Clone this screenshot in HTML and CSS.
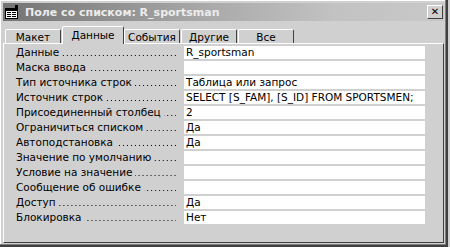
FILE: index.html
```html
<!DOCTYPE html>
<html>
<head>
    <title>Поле со списком: R_sportsman</title>
    <link rel="stylesheet" href="styles.css">
</head>
<body>
    <div class="window">
        <div class="titlebar">
            <svg class="app-icon" width="14" height="14" viewBox="0 0 14 14">
                <rect x="0.5" y="3.5" width="12" height="10" fill="#fff" stroke="#000"/>
                <rect x="1" y="4" width="11" height="2" fill="#000"/>
                <rect x="2" y="7" width="4" height="1" fill="#000"/>
                <rect x="7" y="7" width="4" height="1" fill="#000"/>
                <rect x="2" y="9" width="4" height="1" fill="#000"/>
                <rect x="7" y="9" width="4" height="1" fill="#000"/>
                <rect x="2" y="11" width="4" height="1" fill="#000"/>
                <rect x="7" y="11" width="4" height="1" fill="#000"/>
                <path d="M10 0 L13 0 L13 3 L11.5 4.5 L10 3 Z" fill="#000"/>
            </svg>
            <span class="title">Поле со списком: R_sportsman</span>
            <div class="close">&#x2715;</div>
        </div>

        <div class="tabs">
            <div class="tab">Макет</div>
            <div class="tab active">Данные</div>
            <div class="tab">События</div>
            <div class="tab">Другие</div>
            <div class="tab">Все</div>
        </div>

        <div class="panel">
            <div class="props">
                <div class="name"><span>Данные</span><i class="dots"></i></div>
                <div class="value">R_sportsman</div>

                <div class="name"><span>Маска ввода</span><i class="dots"></i></div>
                <div class="value"></div>

                <div class="name"><span>Тип источника строк</span><i class="dots"></i></div>
                <div class="value">Таблица или запрос</div>

                <div class="name"><span>Источник строк</span><i class="dots"></i></div>
                <div class="value">SELECT [S_FAM], [S_ID] FROM SPORTSMEN;</div>

                <div class="name"><span>Присоединенный столбец</span><i class="dots"></i></div>
                <div class="value">2</div>

                <div class="name"><span>Ограничиться списком</span><i class="dots"></i></div>
                <div class="value">Да</div>

                <div class="name"><span>Автоподстановка</span><i class="dots"></i></div>
                <div class="value">Да</div>

                <div class="name"><span>Значение по умолчанию</span><i class="dots"></i></div>
                <div class="value"></div>

                <div class="name"><span>Условие на значение</span><i class="dots"></i></div>
                <div class="value"></div>

                <div class="name"><span>Сообщение об ошибке</span><i class="dots"></i></div>
                <div class="value"></div>

                <div class="name"><span>Доступ</span><i class="dots"></i></div>
                <div class="value">Да</div>

                <div class="name"><span>Блокировка</span><i class="dots"></i></div>
                <div class="value">Нет</div>
            </div>
        </div>
    </div>
</body>
</html>
```

FILE: styles.css
```css
body { margin: 0; background: #d0d0d0; font-family: "DejaVu Sans", Tahoma, sans-serif; font-size: 10.5px; color: #000; }

.window { width: 442px; height: 241px; padding: 2px; background: #d0d0d0; border-right: 2px solid #404040; border-bottom: 2px solid #404040; box-shadow: inset -1px -1px 0 #808080, inset 1px 1px 0 #fff; display: flex; flex-direction: column; }

.titlebar { height: 18px; margin: 1px 0 0 1px; display: flex; align-items: center; padding: 0 1px 0 2px; background: linear-gradient(to right, #747474, #a8a8a8 45%, #c2c2c2 75%, #c8c8c8); }
.app-icon { margin-right: 6px; flex: none; }
.title { color: #ececec; font-weight: bold; font-size: 11px; flex: 1; white-space: nowrap; }
.close { width: 14px; height: 12px; background: #d0d0d0; border: 1px solid; border-color: #fff #404040 #404040 #fff; font-size: 10px; font-weight: bold; line-height: 12px; text-align: center; }

.tabs { display: flex; align-items: flex-end; height: 22px; padding-left: 3px; }
.tab { width: 54px; height: 13px; line-height: 14px; text-align: center; border: 1px solid; border-bottom: none; border-color: #fff #404040 #fff #fff; border-radius: 2px 2px 0 0; }
.tab.active { width: 60px; height: 17px; line-height: 16px; margin: 0 -1px -1px -1px; position: relative; z-index: 1; background: #d0d0d0; }
.tab + .tab { margin-left: 1px; }
.tab.active + .tab { margin-left: 1px; }

.panel { flex: 1; margin-left: 1px; border-top: 1px solid #fff; border-left: 1px solid #fff; border-right: 1px solid #404040; border-bottom: 1px solid #404040; padding: 2px 18px 0 12px; }

.props { display: grid; grid-template-columns: 168px 1fr; row-gap: 2px; }
.name { height: 13px; line-height: 13px; display: flex; align-items: flex-end; white-space: nowrap; }
.name span { line-height: 13px; }
.dots { flex: 1; height: 13px; margin: 0 8px 0 3px; background: linear-gradient(to right, transparent 3px, #000 3px) right 0 bottom 3px / 4px 1px repeat-x; }
.value { height: 13px; line-height: 13px; background: #fff; padding-left: 2px; white-space: nowrap; overflow: hidden; }
```
